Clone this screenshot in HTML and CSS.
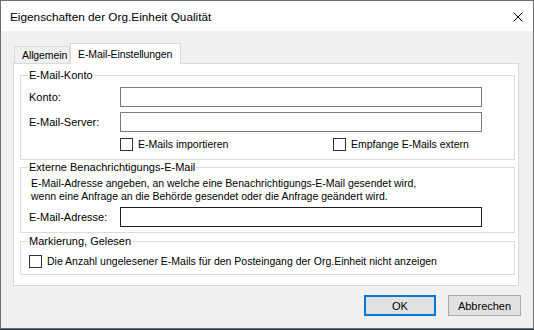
FILE: index.html
```html
<!DOCTYPE html>
<html lang="de">
<head>
  <meta charset="UTF-8" />
  <title>Eigenschaften der Org.Einheit Qualität</title>
  <link rel="stylesheet" href="styles.css">
</head>
<body>
<div class="window">
  <div class="titlebar">
    <span class="title">Eigenschaften der Org.Einheit Qualität</span>
    <svg class="close" width="10" height="10" viewBox="0 0 10 10"><path d="M0.5 0.5L9.5 9.5M9.5 0.5L0.5 9.5" stroke="#000" stroke-width="1"/></svg>
  </div>

  <div class="content">
    <!-- tabs -->
    <div class="tabs">
      <div class="tab">Allgemein</div>
      <div class="tab active">E-Mail-Einstellungen</div>
    </div>

    <div class="panel">
      <fieldset class="group g-konto">
        <legend>E-Mail-Konto</legend>
        <div class="field">
          <label>Konto:</label>
          <div class="input"></div>
        </div>
        <div class="field">
          <label>E-Mail-Server:</label>
          <div class="input"></div>
        </div>
        <div class="checks">
          <span class="check check-left"><span class="box"></span>E-Mails importieren</span>
          <span class="check"><span class="box"></span>Empfange E-Mails extern</span>
        </div>
      </fieldset>

      <fieldset class="group g-extern">
        <legend>Externe Benachrichtigungs-E-Mail</legend>
        <p class="hint">E-Mail-Adresse angeben, an welche eine Benachrichtigungs-E-Mail gesendet wird,<br>wenn eine Anfrage an die Behörde gesendet oder die Anfrage geändert wird.</p>
        <div class="field">
          <label>E-Mail-Adresse:</label>
          <div class="input dark"></div>
        </div>
      </fieldset>

      <fieldset class="group g-mark">
        <legend>Markierung, Gelesen</legend>
        <span class="check"><span class="box"></span>Die Anzahl ungelesener E-Mails für den Posteingang der Org.Einheit nicht anzeigen</span>
      </fieldset>
    </div>

    <div class="buttons">
      <button class="btn default">OK</button>
      <button class="btn">Abbrechen</button>
    </div>
  </div>
</div>
</body>
</html>
```

FILE: styles.css
```css
html,body{margin:0;padding:0;background:#2b3a4a;}
body{font-family:"Liberation Sans",Arial,sans-serif;font-size:10.5px;color:#000;}
.window{width:532px;height:327px;border:1px solid #6e6e6e;background:#f0f0f0;display:flex;flex-direction:column;}
.titlebar{height:30px;background:#fff;display:flex;align-items:center;justify-content:space-between;padding:0 10px 0 9px;}
.title{font-family:"Liberation Sans",Arial,sans-serif;font-size:11.8px;margin-top:1px;}
.close{margin-top:1px;}
.content{flex:1;padding:12px 0 0 12px;}

/* tabs */
.tabs{display:flex;align-items:flex-end;height:20px;position:relative;z-index:1;padding-left:1px;}
.tab{box-sizing:border-box;width:56px;height:17px;line-height:17px;padding-left:7px;border:1px solid #d9d9d9;border-bottom:none;background:#f0f0f0;white-space:nowrap;overflow:hidden;letter-spacing:-0.1px;}
.tab.active{width:111px;height:21px;line-height:21px;background:#fff;margin-bottom:-1px;}

.panel{width:504px;height:221px;border:1px solid #d9d9d9;background:#fff;padding:0;}

/* group boxes */
.group{margin:4px 3px 0 6px;padding:0 0 8px 8px;border:1px solid #dcdcdc;min-width:0;}
.group legend{padding:0 1px;margin-left:-1px;line-height:14px;font-size:11px;}
.g-extern{margin-top:0;padding-bottom:5px;}
.g-mark{margin-top:1px;padding-bottom:6px;}

.field{display:flex;align-items:center;margin-top:5px;height:20px;}
.field label{width:91px;font-size:11px;}
.input{width:360px;height:18px;border:1px solid #7a7a7a;background:#fff;}
.input.dark{border-color:#1e1e1e;}

.checks{display:flex;margin:6px 0 0 91px;height:13px;}
.check{display:flex;align-items:center;height:13px;line-height:13px;}
.check-left{width:213px;}
.box{width:11px;height:11px;border:1px solid #333;background:#fff;margin-right:5px;flex:none;}
.g-mark .check{margin-top:7px;}

.hint{margin:3px 0 0 2px;line-height:13px;}
.g-extern .field{margin-top:4px;}

/* buttons */
.buttons{display:flex;justify-content:flex-end;gap:12px;padding:9px 12px 0 0;}
.btn{font-family:inherit;font-size:11px;height:21px;width:73px;background:#e1e1e1;border:1px solid #adadad;padding:0;color:#000;}
.btn.default{width:72px;border:2px solid #0078d7;}
```
